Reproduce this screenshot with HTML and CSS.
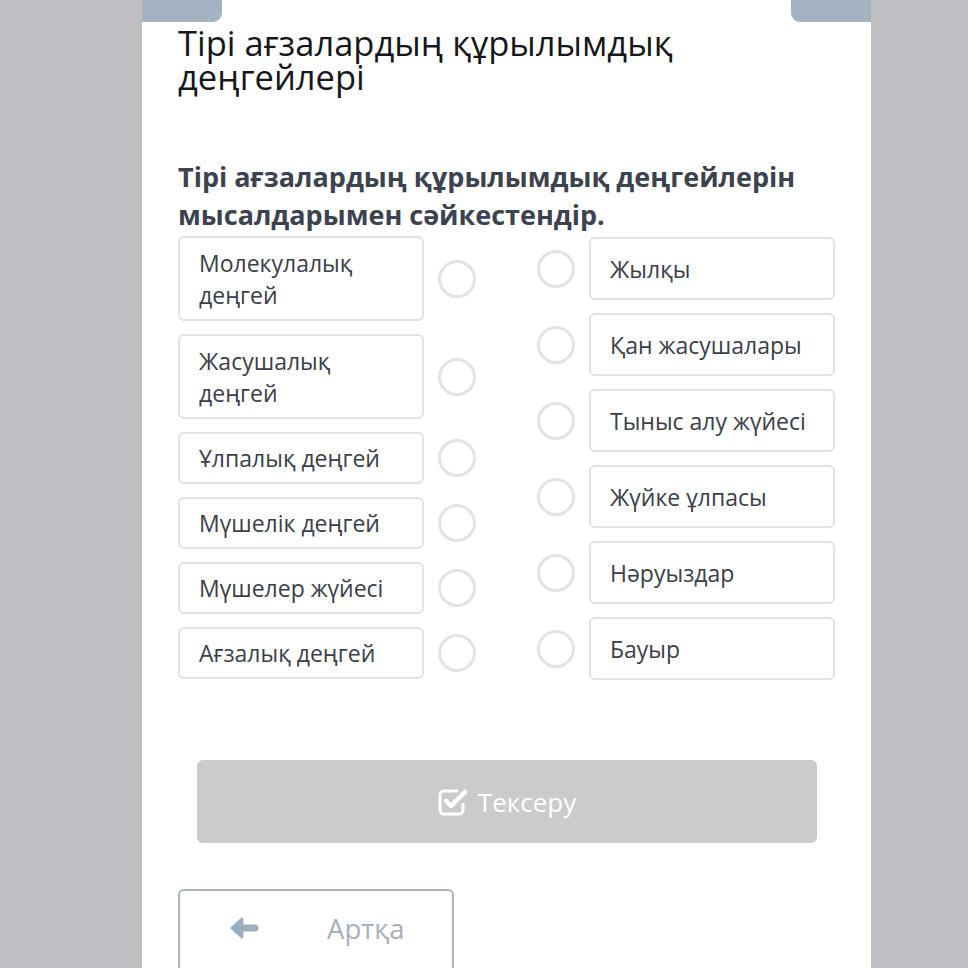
FILE: index.html
```html
<!DOCTYPE html>
<html lang="kk">
<head>
    <meta charset="UTF-8">
    <meta name="viewport" content="width=device-width, initial-scale=1.0">
    <title>Тірі ағзалардың құрылымдық деңгейлері</title>
    <link rel="stylesheet" href="styles.css">
</head>
<body>
    <div class="panel">
        <div class="tabs">
            <div class="tab tab-left"></div>
            <div class="tab tab-right"></div>
        </div>

        <h1>Тірі ағзалардың құрылымдық деңгейлері</h1>
        <p class="question">Тірі ағзалардың құрылымдық деңгейлерін мысалдарымен сәйкестендір.</p>

        <div class="match">
            <div class="col col-left">
                <div class="item"><div class="box tall">Молекулалық деңгей</div><span class="dot"></span></div>
                <div class="item"><div class="box tall">Жасушалық деңгей</div><span class="dot"></span></div>
                <div class="item"><div class="box">Ұлпалық деңгей</div><span class="dot"></span></div>
                <div class="item"><div class="box">Мүшелік деңгей</div><span class="dot"></span></div>
                <div class="item"><div class="box">Мүшелер жүйесі</div><span class="dot"></span></div>
                <div class="item"><div class="box">Ағзалық деңгей</div><span class="dot"></span></div>
            </div>
            <div class="col col-right">
                <div class="item"><span class="dot"></span><div class="box">Жылқы</div></div>
                <div class="item"><span class="dot"></span><div class="box">Қан жасушалары</div></div>
                <div class="item"><span class="dot"></span><div class="box">Тыныс алу жүйесі</div></div>
                <div class="item"><span class="dot"></span><div class="box">Жүйке ұлпасы</div></div>
                <div class="item"><span class="dot"></span><div class="box">Нәруыздар</div></div>
                <div class="item"><span class="dot"></span><div class="box">Бауыр</div></div>
            </div>
        </div>

        <button class="check" disabled>
            <svg width="32" height="30" viewBox="0 0 32 30">
                <path d="M20 4 H6 A4 4 0 0 0 2 8 V23 A4 4 0 0 0 6 27 H21 A4 4 0 0 0 25 23 V16" fill="none" stroke="#fff" stroke-width="3"/>
                <path d="M8 14 L13 19 L27 5" fill="none" stroke="#fff" stroke-width="4.5" stroke-linecap="round" stroke-linejoin="round"/>
            </svg>
            Тексеру
        </button>

        <div class="nav">
            <button class="back">
                <svg width="30" height="24" viewBox="0 0 30 24">
                    <path d="M13 3 L3 12 L13 21 Z" fill="#9aaebf" stroke="#9aaebf" stroke-width="3" stroke-linejoin="round"/>
                    <path d="M10 12 H26" stroke="#9aaebf" stroke-width="7" stroke-linecap="round"/>
                </svg>
                <span>Артқа</span>
            </button>
        </div>
    </div>
</body>
</html>
```

FILE: styles.css
```css
body {
    margin: 0;
    background-color: #bfbec3;
    font-family: "Open Sans", "Noto Sans", sans-serif;
    height: 968px;
    overflow: hidden;
}
.panel {
    width: 729px;
    margin-left: 142px;
    min-height: 968px;
    background-color: #fff;
    padding: 0 36px;
    box-sizing: border-box;
}
.tabs {
    display: flex;
    justify-content: space-between;
    margin: 0 -36px;
    height: 22px;
}
.tab {
    width: 80px;
    height: 22px;
    background-color: #a3b3c1;
}
.tab-left {
    border-bottom-right-radius: 9px;
}
.tab-right {
    border-bottom-left-radius: 9px;
}
h1 {
    margin: 4px 0 0;
    font-size: 34.5px;
    font-weight: 400;
    line-height: 34px;
    color: #15171a;
}
.question {
    margin: 64px 0 0;
    font-size: 27px;
    font-weight: 700;
    line-height: 38px;
    color: #3c434e;
}
.match {
    display: flex;
    justify-content: space-between;
    margin-top: 2px;
}
.col {
    display: flex;
    flex-direction: column;
    gap: 13px;
}
.col-right {
    margin-top: 1px;
}
.item {
    display: flex;
    align-items: center;
    gap: 14px;
}
.box {
    display: flex;
    align-items: center;
    width: 246px;
    height: 52px;
    box-sizing: border-box;
    border: 2px solid #dfe2e6;
    border-radius: 6px;
    padding: 0 19px;
    font-size: 23px;
    line-height: 32px;
    color: #3b4048;
}
.box.tall {
    height: 85px;
}
.col-right .box {
    height: 63px;
}
.dot {
    width: 38px;
    height: 38px;
    box-sizing: border-box;
    border: 3px solid #e1e3e8;
    border-radius: 50%;
}
.check {
    display: flex;
    justify-content: center;
    align-items: center;
    gap: 8px;
    width: 620px;
    height: 83px;
    margin: 80px 0 0 19px;
    border: none;
    border-radius: 6px;
    background-color: #cbcbcb;
    color: #fff;
    font-family: "Open Sans", "Noto Sans", sans-serif;
    font-size: 26px;
}
.nav {
    margin-top: 46px;
}
.back {
    display: flex;
    align-items: center;
    width: 276px;
    height: 90px;
    padding: 0 0 12px 49px;
    box-sizing: border-box;
    background-color: #fff;
    border: 2px solid #a9b5bf;
    border-radius: 6px;
    font-family: "Open Sans", "Noto Sans", sans-serif;
    font-size: 27.5px;
    color: #a7b1bb;
}
.back span {
    margin-left: 68px;
}
```
